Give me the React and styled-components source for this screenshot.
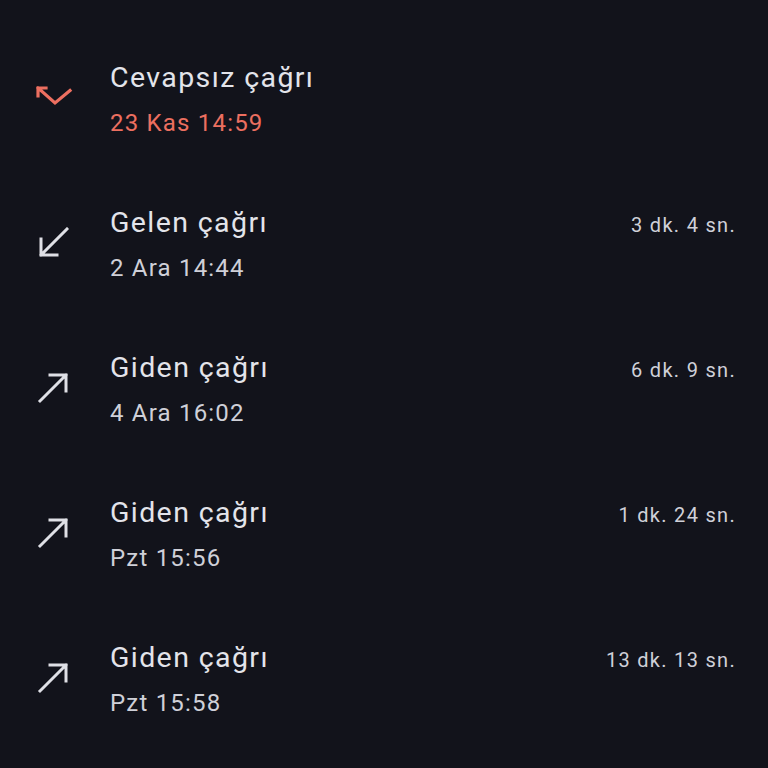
import React from "react";
import styled, { createGlobalStyle } from "styled-components";

const Global = createGlobalStyle`
  html, body {
    margin: 0;
    background: #12131b;
  }
  body {
    font-family: Roboto, "Noto Sans", sans-serif;
  }
`;

/*--- styles ---*/
const List = styled.ul`
  list-style: none;
  margin: 0;
  padding: 28px 0 0;
  width: 768px;
  height: 768px;
  box-sizing: border-box;
  overflow: hidden;
  background: #12131b;
`;
const Row = styled.li`
  display: grid;
  grid-template-columns: 110px 1fr auto;
  align-items: start;
  padding: 28px 33px 27px 0;
  height: 145px;
  box-sizing: border-box;
`;
const IconBox = styled.div`
  display: flex;
  justify-content: flex-start;
  padding: ${(p) => (p.$missed ? "30px 0 0 36px" : "26px 0 0 37px")};
  svg {
    display: block;
  }
`;
const Text = styled.div`
  display: flex;
  flex-direction: column;
`;
const Title = styled.div`
  font-size: 28.5px;
  line-height: 44px;
  letter-spacing: 1.4px;
  color: #e3e4ea;
`;
const Sub = styled.div`
  font-size: 24px;
  line-height: 46px;
  letter-spacing: 1.2px;
  color: ${(p) => (p.$missed ? "#ec6f60" : "#cfd0d8")};
`;
const Duration = styled.div`
  font-size: 20px;
  line-height: 44px;
  letter-spacing: 1.3px;
  margin-right: -1px;
  color: #cfd0d8;
  padding-top: 2px;
`;

const MissedIcon = () => (
  <svg width="38" height="22" viewBox="0 0 38 22" fill="none">
    <path
      d="M2 2 L19 17 L34 4.5 M2 2 L10 2 M2 2 L2 10"
      stroke="#ec6f60"
      strokeWidth="3.2"
      strokeLinecap="square"
      strokeLinejoin="miter"
    />
  </svg>
);

const InIcon = () => (
  <svg width="32" height="32" viewBox="0 0 32 32" fill="none">
    <path
      d="M30 2 L4 28 M4 28 L4 12 M4 28 L20 28"
      stroke="#dfe0e6"
      strokeWidth="3"
      strokeLinecap="square"
    />
  </svg>
);

const OutIcon = () => (
  <svg width="32" height="32" viewBox="0 0 32 32" fill="none">
    <path
      d="M3 29 L29 3 M29 3 L13 3 M29 3 L29 19"
      stroke="#dfe0e6"
      strokeWidth="3"
      strokeLinecap="square"
    />
  </svg>
);

const calls = [
  { type: "missed", title: "Cevapsız çağrı", time: "23 Kas 14:59" },
  { type: "in", title: "Gelen çağrı", time: "2 Ara 14:44", dur: "3 dk. 4 sn." },
  { type: "out", title: "Giden çağrı", time: "4 Ara 16:02", dur: "6 dk. 9 sn." },
  { type: "out", title: "Giden çağrı", time: "Pzt 15:56", dur: "1 dk. 24 sn." },
  { type: "out", title: "Giden çağrı", time: "Pzt 15:58", dur: "13 dk. 13 sn." },
];

/*--- output ---*/
const App = () => {
  return (
    <>
      <Global />
      <List>
        {calls.map((c, i) => (
          <Row key={i}>
            <IconBox $missed={c.type === "missed"}>
              {c.type === "missed" ? <MissedIcon /> : c.type === "in" ? <InIcon /> : <OutIcon />}
            </IconBox>
            <Text>
              <Title>{c.title}</Title>
              <Sub $missed={c.type === "missed"}>{c.time}</Sub>
            </Text>
            <Duration>{c.dur}</Duration>
          </Row>
        ))}
      </List>
    </>
  );
};

export default App;
